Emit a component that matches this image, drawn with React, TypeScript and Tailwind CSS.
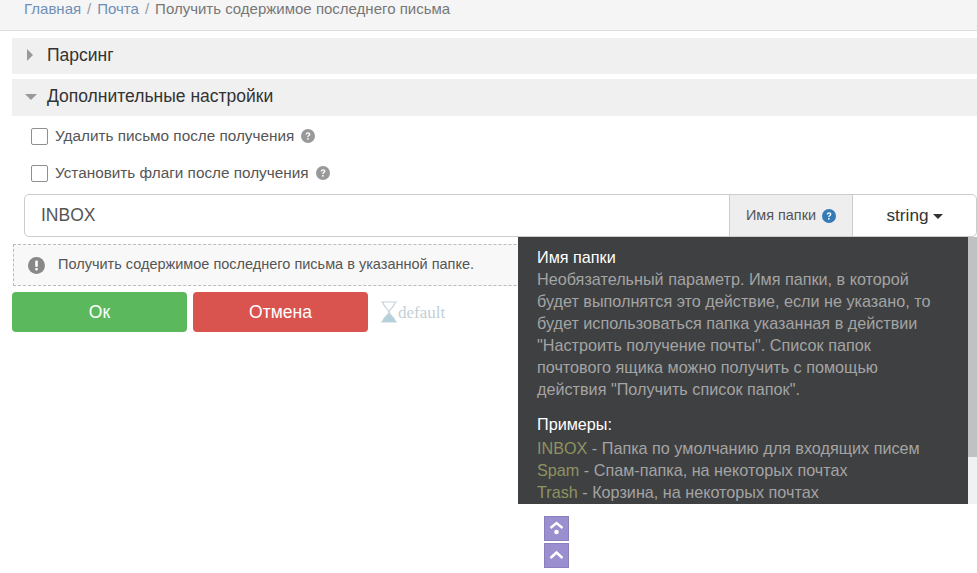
import React from "react";

const HelpIcon = ({ color = "#999" }: { color?: string }) => (
  <svg width="14" height="14" viewBox="0 0 14 14" className="shrink-0">
    <circle cx="7" cy="7" r="7" fill={color} />
    <path d="M4.7 5.4C4.8 4 5.8 3.2 7.1 3.2c1.300 0 2.300.8 2.300 2 0 1-.6 1.400-1.200 1.800-.5.3-.7.6-.7 1.100H6.200c0-.9.3-1.500 1-1.900.5-.3.800-.6.800-1 0-.4-.4-.7-.9-.7-.6 0-1 .3-1.100 1z" fill="#fff" />
    <rect x="6.100" y="9" width="1.500" height="1.600" fill="#fff" />
  </svg>
);

const Section = ({ title, open, tall }: { title: string; open?: boolean; tall?: boolean }) => (
  <div className={`flex items-center ml-3 pb-[2px] bg-[#f0f0f0] text-[17.500px] text-[#333] ${tall ? "h-[37px]" : "h-[36px]"}`}>
    <div className="w-[35px] flex justify-center shrink-0 pl-[5px]">
      {open ? (
        <span className="border-x-[6px] border-x-transparent border-t-[6px] border-t-[#999] ml-[-3px]" />
      ) : (
        <span className="border-y-[6px] border-y-transparent border-l-[6px] border-l-[#999] ml-[-5px]" />
      )}
    </div>
    <span>{title}</span>
  </div>
);

const CheckRow = ({ label }: { label: string }) => (
  <div className="flex items-center h-[18px] pl-[31px] text-[15.300px] text-[#555]">
    <span className="w-[17px] h-[17px] border border-[#8f8f8f] rounded-[2px] bg-white mr-[7px]" />
    <span className="mr-[7px]">{label}</span>
    <HelpIcon />
  </div>
);

const Example = ({ name, text }: { name: string; text: string }) => (
  <div>
    <span className="text-[#8f9360]">{name}</span> - {text}
  </div>
);

export default function App() {
  return (
    <div className="relative h-[573px] overflow-hidden bg-white font-['Liberation_Sans',Arial,sans-serif]">
      <div className="flex items-start gap-[6px] h-[31px] pl-6 bg-[#f5f5f5] border-b border-[#ddd] text-[15px] leading-[18px] text-[#777]">
        <span className="text-[#6f8fb8]">Главная</span>
        <span className="text-[#999]">/</span>
        <span className="text-[#6f8fb8]">Почта</span>
        <span className="text-[#999]">/</span>
        <span>Получить содержимое последнего письма</span>
      </div>

      <div className="pt-[7px]">
        <Section title="Парсинг" />
        <div className="h-[5px]" />
        <Section title="Дополнительные настройки" open tall />
      </div>

      <div className="flex flex-col gap-[19px] pt-[11px]">
        <CheckRow label="Удалить письмо после получения" />
        <CheckRow label="Установить флаги после получения" />
      </div>

      <div className="flex h-[43px] ml-6 mt-[12px] border border-[#ccc] rounded-[5px] text-[#555]">
        <div className="flex-1 flex items-center pl-4 text-[17.500px]">INBOX</div>
        <div className="w-[124px] flex items-center justify-center gap-[6px] bg-[#eee] border-x border-[#ccc] text-[14.400px]">
          Имя папки <HelpIcon color="#337ab7" />
        </div>
        <div className="w-[123px] flex items-center justify-center gap-1 text-[17.200px] text-[#333]">
          string
          <span className="border-x-[5px] border-x-transparent border-t-[5px] border-t-[#333] mt-[2px]" />
        </div>
      </div>

      <div className="flex items-center h-[42px] ml-[13px] mt-[7px] pl-[14px] bg-[#f8f8f8] border border-dashed border-[#bbb] text-[14.500px] text-[#555]">
        <svg width="17" height="17" viewBox="0 0 17 17" className="mr-[13px]">
          <circle cx="8.500" cy="8.500" r="8.500" fill="#888" />
          <rect x="7.200" y="3.500" width="2.600" height="6.500" rx="1" fill="#fff" />
          <rect x="7.200" y="11" width="2.600" height="2.500" rx="1" fill="#fff" />
        </svg>
        Получить содержимое последнего письма в указанной папке.
      </div>

      <div className="flex items-center gap-[6px] ml-3 mt-[6px]">
        <button className="w-[175px] h-[40px] rounded-[4px] bg-[#5cb85c] text-white text-[17.500px]">Ок</button>
        <button className="w-[175px] h-[40px] rounded-[4px] bg-[#d9534f] text-white text-[17.500px]">Отмена</button>
        <div className="flex items-end ml-[6px] text-[#c3cfd6] text-[17px] font-['Liberation_Serif',serif]">
          <svg width="18" height="22" viewBox="0 0 18 22">
            <path d="M1 1h16M1 21h16M3 1c0 5 6 7 6 10s-6 5-6 10M15 1c0 5-6 7-6 10s6 5 6 10" fill="none" stroke="#c3d3da" strokeWidth="1.200" />
            <path d="M9 12c-1 3-6 5-7 9h14c-1-4-6-6-7-9z" fill="#b5d0da" />
          </svg>
          <span className="leading-[20px]">default</span>
        </div>
      </div>

      <div className="absolute left-[518px] top-[237px] flex w-[459px] h-[267px]">
        <div className="flex-1 bg-[#3f4042] pt-[9px] pl-[19px] pr-[30px] text-[16.200px] leading-[22px] text-[#a4a4a4] overflow-hidden">
          <div className="text-white">Имя папки</div>
          <div>
            Необязательный параметр. Имя папки, в которой будет выполнятся это действие, если не указано, то будет
            использоваться папка указанная в действии "Настроить получение почты". Список папок почтового ящика можно
            получить с помощью действия "Получить список папок".
          </div>
          <div className="text-white mt-[13px] mb-[2px]">Примеры:</div>
          <Example name="INBOX" text="Папка по умолчанию для входящих писем" />
          <Example name="Spam" text="Спам-папка, на некоторых почтах" />
          <Example name="Trash" text="Корзина, на некоторых почтах" />
        </div>
        <div className="w-[9px] bg-[#f1f1f1]">
          <div className="h-[220px] bg-[#c1c1c1]" />
        </div>
      </div>

      <div className="absolute left-[544px] top-[516px] flex flex-col gap-[2px]">
        <div className="w-[25px] h-[25px] bg-[#9b8fd0] border border-[#8a80bd] flex items-center justify-center">
          <svg width="19" height="19" viewBox="0 0 19 19">
            <path d="M3.500 9l6-5 6 5" fill="none" stroke="#fff" strokeWidth="2.400" />
            <circle cx="9.500" cy="13" r="2.300" fill="#fff" />
          </svg>
        </div>
        <div className="w-[25px] h-[25px] bg-[#9b8fd0] border border-[#8a80bd] flex items-center justify-center">
          <svg width="19" height="19" viewBox="0 0 19 19">
            <path d="M3.500 12l6-5.500 6 5.500" fill="none" stroke="#fff" strokeWidth="2.400" />
          </svg>
        </div>
      </div>
    </div>
  );
}
